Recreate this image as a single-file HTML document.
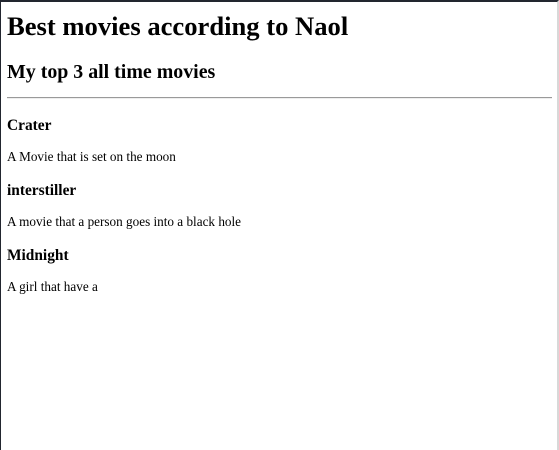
<!DOCTYPE html>
<html><head><style>
html,body{margin:0;padding:0;width:559px;height:450px;overflow:hidden;background:#fff}
body{border-top:2px solid #22262f;border-left:1px solid #22262f;border-right:2px solid #d8d8d8;box-sizing:border-box;position:relative;font-family:"Liberation Serif",serif;color:#000}
.t{position:absolute;left:6px;margin:0;line-height:1;white-space:nowrap}
h1.t{font-size:26.6px;font-weight:bold}
h2.t{font-size:19.9px;font-weight:bold}
h3.t{font-size:15.4px;font-weight:bold}
p.t{font-size:13.2px}
hr{position:absolute;left:6px;top:95px;width:545px;margin:0;border:0;border-top:1px solid #9a9a9a;border-bottom:1px solid #eee;height:0}
</style></head><body>
<h1 class="t" style="top:11px">Best movies according to Naol</h1>
<h2 class="t" style="top:60.5px">My top 3 all time movies</h2>
<hr>
<h3 class="t" style="top:116px">Crater</h3>
<p class="t" style="top:148px">A Movie that is set on the moon</p>
<h3 class="t" style="top:181px">interstiller</h3>
<p class="t" style="top:213px">A movie that a person goes into a black hole</p>
<h3 class="t" style="top:246px">Midnight</h3>
<p class="t" style="top:278px">A girl that have a</p>
</body></html>
